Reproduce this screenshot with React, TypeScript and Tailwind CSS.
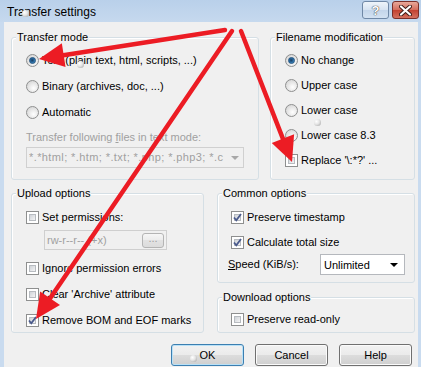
import type { ReactNode } from 'react'

const arrows = [
  { x1: 225, y1: 30, x2: 39, y2: 59 },
  { x1: 232, y1: 31, x2: 36, y2: 319 },
  { x1: 241, y1: 31, x2: 292, y2: 162 },
]

const dots = [
  { x: 25, y: 13 },
  { x: 80, y: 64 },
  { x: 317, y: 122 },
  { x: 193, y: 358 },
]

export default function App() {
  return (
    <div className="relative w-[421px] h-[367px] overflow-hidden flex flex-col bg-[#c9dbef] font-['Liberation_Sans',Arial,sans-serif] text-[11px] text-black">
      {/* title bar */}
      <div className="h-[22px] flex items-start justify-between pl-[7px] pr-[2px] bg-[linear-gradient(#b9d0ea,#c6d9ee)]">
        <span className="text-[12px] leading-[24px]">Transfer settings</span>
        <div className="flex gap-[3px] pt-[1px]">
          <div className="w-[27px] h-[18px] rounded-[3px] border border-[#6f88a6] bg-[linear-gradient(#eef4fa,#d6e3f1_50%,#c3d5ea_50%,#d3e2f2)] flex items-center justify-center">
            <span className="font-bold text-[13px] leading-none text-white [text-shadow:0_0_1px_#333,0_0_1px_#333]">?</span>
          </div>
          <div className="w-[27px] h-[18px] rounded-[3px] border border-[#7a2f2a] bg-[linear-gradient(#e8a89a,#d46b5b_50%,#c2402f_50%,#d3705f)] flex items-center justify-center">
            <svg width="13" height="11" viewBox="0 0 13 11">
              <path d="M2 1.5 L11 9.5 M11 1.5 L2 9.5" stroke="#3b1a16" strokeWidth="4" strokeLinecap="round" />
              <path d="M2 1.5 L11 9.5 M11 1.5 L2 9.5" stroke="#fff" strokeWidth="2.2" strokeLinecap="round" />
            </svg>
          </div>
        </div>
      </div>

      {/* dialog body */}
      <div className="flex-1 ml-[4px] mr-[3px] bg-[#f0f0f0] pl-[7px] pt-[15px] flex flex-col">
        <div className="flex gap-[11px]">
          <Group title="Transfer mode" className="w-[248px] h-[143px] pl-[14px] pt-[9px]">
            <div className="h-[26px] flex items-center gap-[3px]"><Radio on /><span>Text (plain text, html, scripts, ...)</span></div>
            <div className="h-[26px] flex items-center gap-[3px]"><Radio /><span>Binary (archives, doc, ...)</span></div>
            <div className="h-[26px] flex items-center gap-[3px]"><Radio /><span>Automatic</span></div>
            <div className="mt-[6px] leading-[13px] text-[#a0a0a0]">
              Transfer following <span className="underline">f</span>iles in text mode:
            </div>
            <div className="mt-[3px] w-[218px] h-[21px] border border-[#d0d0d0] bg-[#f0f0f0] flex items-center pl-[2px] pr-[4px] text-[#a0a0a0]">
              <span className="w-[198px] overflow-hidden whitespace-nowrap tracking-[0.4px]">*.*html; *.htm; *.txt; *.php; *.php3; *.c</span>
              <span className="ml-auto w-0 h-0 border-x-[4px] border-x-transparent border-t-[4px] border-t-[#a8a8a8]" />
            </div>
          </Group>
          <Group title="Filename modification" className="w-[145px] h-[143px] pl-[14px] pt-[10px]">
            <div className="h-[25px] flex items-center gap-[3px]"><Radio on /><span>No change</span></div>
            <div className="h-[25px] flex items-center gap-[3px]"><Radio /><span>Upper case</span></div>
            <div className="h-[25px] flex items-center gap-[3px]"><Radio /><span>Lower case</span></div>
            <div className="h-[25px] flex items-center gap-[3px]"><Radio /><span>Lower case 8.3</span></div>
            <div className="h-[25px] flex items-center gap-[3px]"><Check /><span>Replace '\:*?' ...</span></div>
          </Group>
        </div>

        <div className="mt-[13px] flex gap-[13px]">
          <Group title="Upload options" className="w-[193px] h-[140px] pl-[14px] pt-[13px]">
            <div className="h-[20px] flex items-center gap-[3px]"><Check /><span>Set permissions:</span></div>
            <div className="mt-[3px] ml-[18px] w-[123px] h-[20px] border border-[#cfcfcf] bg-[#f0f0f0] flex items-center pl-[2px] pr-[2px] text-[#a0a0a0]">
              <span>rw-r--r-- (+x)</span>
              <span className="ml-auto w-[22px] h-[15px] rounded-[3px] border border-[#b4b4b4] bg-[linear-gradient(#f6f6f6,#ebebeb_50%,#e2e2e2_50%,#dcdcdc)] flex items-center justify-center leading-none pb-[3px]">...</span>
            </div>
            <div className="mt-[8px] flex flex-col gap-[6px]">
              <div className="h-[20px] flex items-center gap-[3px]"><Check /><span>Ignore permission errors</span></div>
              <div className="h-[20px] flex items-center gap-[3px]"><Check /><span>Clear 'Archive' attribute</span></div>
              <div className="h-[20px] flex items-center gap-[3px]"><Check on /><span>Remove BOM and EOF marks</span></div>
            </div>
          </Group>
          <div className="flex flex-col">
            <Group title="Common options" className="w-[198px] h-[90px] pl-[13px] pt-[13px]">
              <div className="h-[20px] flex items-center gap-[3px]"><Check on /><span>Preserve timestamp</span></div>
              <div className="mt-[5px] h-[20px] flex items-center gap-[3px]"><Check on /><span>Calculate total size</span></div>
              <div className="mt-[2px] -ml-[3px] h-[21px] flex items-center">
                <span className="w-[92px]"><span className="underline">S</span>peed (KiB/s):</span>
                <div className="w-[85px] h-[21px] border border-[#b5b8bd] bg-white flex items-start pl-[3px] pr-[6px] pt-[2px]">
                  <span>Unlimited</span>
                  <span className="ml-auto mt-[6px] w-0 h-0 border-x-[4px] border-x-transparent border-t-[4px] border-t-black" />
                </div>
              </div>
            </Group>
            <Group title="Download options" className="mt-[14px] w-[198px] h-[36px] pl-[13px] pt-[11px]">
              <div className="h-[20px] flex items-center gap-[3px]"><Check /><span>Preserve read-only</span></div>
            </Group>
          </div>
        </div>

        <div className="mt-[11px] flex justify-end gap-[11px] pr-[6px]">
          <Button label="OK" primary />
          <Button label="Cancel" />
          <Button label="Help" />
        </div>
      </div>

      {/* red annotation arrows */}
      <svg className="absolute inset-0 pointer-events-none" width="421" height="367">
        {arrows.map((a, i) => {
          const dx = a.x2 - a.x1
          const dy = a.y2 - a.y1
          const len = Math.hypot(dx, dy)
          const ux = dx / len
          const uy = dy / len
          const bx = a.x2 - ux * 25
          const by = a.y2 - uy * 25
          const px = -uy * 12
          const py = ux * 12
          return (
            <g key={i}>
              <line x1={a.x1} y1={a.y1} x2={bx + ux * 2} y2={by + uy * 2} stroke="#ec1c24" strokeWidth="4.5" strokeLinecap="round" />
              <polygon points={`${a.x2},${a.y2} ${bx + px},${by + py} ${bx - px},${by - py}`} fill="#ec1c24" />
            </g>
          )
        })}
      </svg>

      {dots.map((d, i) => (
        <span
          key={i}
          className="absolute w-[7px] h-[7px] rounded-full bg-[radial-gradient(circle_at_35%_35%,#ffffff,#e4e4e4_45%,#9a9a9a)]"
          style={{ left: d.x - 3, top: d.y - 3 }}
        />
      ))}
    </div>
  )
}

function Group({ title, className, children }: { title: string; className: string; children: ReactNode }) {
  return (
    <div className={`relative border border-[#d5dfe5] rounded-[3px] shadow-[inset_1px_1px_0_#ffffff] flex flex-col ${className}`}>
      <span className="absolute left-[4px] -top-[7px] px-[1px] bg-[#f0f0f0] leading-[13px]">{title}</span>
      {children}
    </div>
  )
}

function Radio({ on }: { on?: boolean }) {
  return (
    <span className="shrink-0 w-[13px] h-[13px] rounded-full border border-[#8e8f8f] bg-[radial-gradient(circle_at_60%_65%,#ffffff,#dcdcdc_70%,#c4c4c4)] flex items-center justify-center">
      {on && <span className="w-[7px] h-[7px] rounded-full bg-[radial-gradient(circle_at_45%_45%,#1b3c5c,#2a6da6_55%,#7ccaf2)] border border-[#1d4f7c]" />}
    </span>
  )
}

function Check({ on }: { on?: boolean }) {
  return (
    <span className="shrink-0 relative w-[13px] h-[13px] border border-[#8e8f8f] bg-white p-[2px]">
      <span className="block w-full h-full border border-[#b7bbc0] bg-[linear-gradient(135deg,#cfd3d8,#f4f4f5)]" />
      {on && (
        <svg className="absolute inset-0" width="11" height="11" viewBox="0 0 11 11">
          <path d="M2 5.5 L4.3 8.3 L9 2" fill="none" stroke="#4a5a8c" strokeWidth="1.8" />
        </svg>
      )}
    </span>
  )
}

function Button({ label, primary }: { label: string; primary?: boolean }) {
  return (
    <div
      className={`w-[73px] h-[22px] rounded-[3px] border flex items-center justify-center bg-[linear-gradient(#f2f2f2,#ebebeb_50%,#dddddd_50%,#cfcfcf)] ${
        primary ? 'border-[#3c7fb1] shadow-[inset_0_0_0_1px_#b9e1f7]' : 'border-[#707070] shadow-[inset_0_0_0_1px_#fbfbfb]'
      }`}
    >
      {label}
    </div>
  )
}
